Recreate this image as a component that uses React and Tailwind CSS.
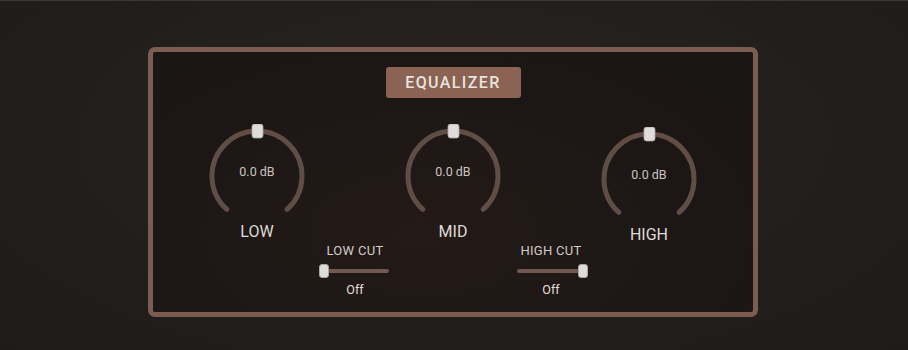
import React from 'react';

const font = { fontFamily: 'Roboto, "Noto Sans", sans-serif' };

function Knob({ label, offset = '' }) {
  // arc of ~276 degrees, gap at the bottom
  const cx = 50;
  const cy = 52;
  const r = 45;
  const a = (132 * Math.PI) / 180;
  const sx = cx + r * Math.cos(a);
  const sy = cy + r * Math.sin(a);
  const ex = cx - r * Math.cos(a);

  return (
    <div className={`flex flex-col items-center ${offset}`}>
      <div className="relative w-[100px] h-[90px]">
        <svg width="100" height="90" viewBox="0 0 100 90">
          <path
            d={`M ${sx} ${sy} A ${r} ${r} 0 1 1 ${ex} ${sy}`}
            fill="none"
            stroke="#5f4d46"
            strokeWidth="5"
            strokeLinecap="round"
          />
          <rect x="45" y="0" width="11" height="14" rx="2.5" fill="#dedddb" stroke="#a9a5a2" strokeWidth="0.8" />
        </svg>
        <div className="absolute left-0 right-0 top-[40px] text-center text-[12.5px] leading-4 text-[#c9c5c2]">
          0.0 dB
        </div>
      </div>
      <div className="mt-[8px] text-[16px] leading-[20px] text-[#dedad7]">{label}</div>
    </div>
  );
}

function CutSlider({ label, right }) {
  return (
    <div className="flex flex-col items-center mt-[119px]">
      <div className="text-[13px] leading-4 tracking-[0.3px] text-[#d0ccc9]">{label}</div>
      <div className="relative mt-[5px] w-[68px] h-[14px] flex items-center">
        <div className="w-full h-[4px] rounded-sm bg-[#6e5850]" />
        <div
          className={`absolute top-0 w-[10px] h-[14px] rounded-[3px] bg-[#dedddb] border border-[#a9a5a2] ${
            right ? 'right-[-3px]' : 'left-[-2px]'
          }`}
        />
      </div>
      <div className="mt-[4px] text-[12.5px] leading-4 text-[#e2dedb]">Off</div>
    </div>
  );
}

export default function App() {
  return (
    <div
      className="w-[908px] h-[350px] overflow-hidden border-t border-[#3a3938] bg-[radial-gradient(ellipse_at_50%_40%,#2a2523_0%,#221e1c_60%,#1f1b19_100%)]"
      style={font}
    >
      <div className="pt-[46px] pl-[148px]">
        <div className="w-[610px] h-[270px] rounded-[7px] border-[5px] border-[#7a5c50] bg-[radial-gradient(ellipse_at_45%_70%,#241a17_0%,#1c1715_55%,#1a1614_100%)] flex flex-col items-center">
          <div className="mt-[15px] w-[135px] h-[31px] rounded-[3px] bg-[#8b6354] flex items-center justify-center text-[16px] font-medium tracking-[1.4px] text-[#e8e3df]">
            EQUALIZER
          </div>
          <div className="mt-[26px] grid grid-cols-[98px_98px_98px_98px_98px] justify-items-center items-start">
            <Knob label="LOW" />
            <CutSlider label="LOW CUT" />
            <Knob label="MID" />
            <CutSlider label="HIGH CUT" right />
            <Knob label="HIGH" offset="mt-[3px]" />
          </div>
        </div>
      </div>
    </div>
  );
}
